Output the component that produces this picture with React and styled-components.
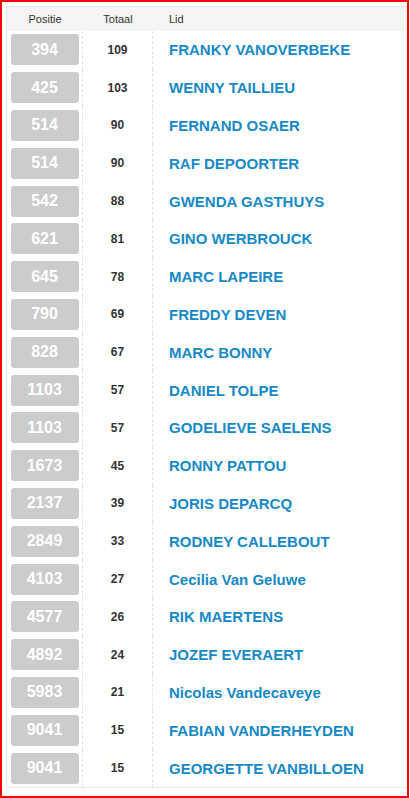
import React from "react";
import styled, { createGlobalStyle } from "styled-components";

const GlobalStyle = createGlobalStyle`
    html, body {
        margin: 0;
        padding: 0;
        background: #fff;
        font-family: "Liberation Sans", Arial, sans-serif;
    }
`;

const Frame = styled.div`
    box-sizing: border-box;
    width: 409px;
    height: 798px;
    border: 2px solid #ff0000;
    padding: 4px 0 0 4px;
    overflow: hidden;
`;

const Table = styled.div`
    display: grid;
    grid-template-columns: 76px 70px 1fr;
    border-top: 1px solid #e8e8e8;
    border-left: 1px solid #e8e8e8;
    border-bottom: 1px solid #e8e8e8;
`;

const HeadCell = styled.div`
    height: 24px;
    display: flex;
    align-items: center;
    justify-content: ${(props) => (props.left ? "flex-start" : "center")};
    padding-left: ${(props) => (props.left ? "16px" : "0")};
    background: #f5f5f5;
    font-size: 11px;
    color: #333;
`;

const Cell = styled.div`
    height: 37.8px;
    display: flex;
    align-items: center;
    box-sizing: border-box;
    border-right: ${(props) => (props.last ? "none" : "1px dashed #e4e4e4")};
`;

const PosCell = styled(Cell)`
    justify-content: center;
`;

const Badge = styled.div`
    width: 68px;
    height: 31px;
    border-radius: 3px;
    background: #cccccc;
    color: #fff;
    font-size: 16px;
    font-weight: bold;
    display: flex;
    align-items: center;
    justify-content: center;
`;

const Total = styled(Cell)`
    justify-content: center;
    font-size: 12px;
    font-weight: bold;
    color: #333;
`;

const Name = styled(Cell)`
    padding-left: 16px;
    font-size: 15px;
    font-weight: bold;
    color: #1689c6;
    white-space: nowrap;
`;

const rows = [
    [394, 109, "FRANKY VANOVERBEKE"],
    [425, 103, "WENNY TAILLIEU"],
    [514, 90, "FERNAND OSAER"],
    [514, 90, "RAF DEPOORTER"],
    [542, 88, "GWENDA GASTHUYS"],
    [621, 81, "GINO WERBROUCK"],
    [645, 78, "MARC LAPEIRE"],
    [790, 69, "FREDDY DEVEN"],
    [828, 67, "MARC BONNY"],
    [1103, 57, "DANIEL TOLPE"],
    [1103, 57, "GODELIEVE SAELENS"],
    [1673, 45, "RONNY PATTOU"],
    [2137, 39, "JORIS DEPARCQ"],
    [2849, 33, "RODNEY CALLEBOUT"],
    [4103, 27, "Cecilia Van Geluwe"],
    [4577, 26, "RIK MAERTENS"],
    [4892, 24, "JOZEF EVERAERT"],
    [5983, 21, "Nicolas Vandecaveye"],
    [9041, 15, "FABIAN VANDERHEYDEN"],
    [9041, 15, "GEORGETTE VANBILLOEN"],
];

export default function App() {
    return (
        <>
            <GlobalStyle />
            <Frame>
                <Table>
                    <HeadCell>Positie</HeadCell>
                    <HeadCell>Totaal</HeadCell>
                    <HeadCell left>Lid</HeadCell>
                    {rows.map(([pos, total, name], i) => (
                        <React.Fragment key={i}>
                            <PosCell>
                                <Badge>{pos}</Badge>
                            </PosCell>
                            <Total>{total}</Total>
                            <Name last>{name}</Name>
                        </React.Fragment>
                    ))}
                </Table>
            </Frame>
        </>
    );
}
